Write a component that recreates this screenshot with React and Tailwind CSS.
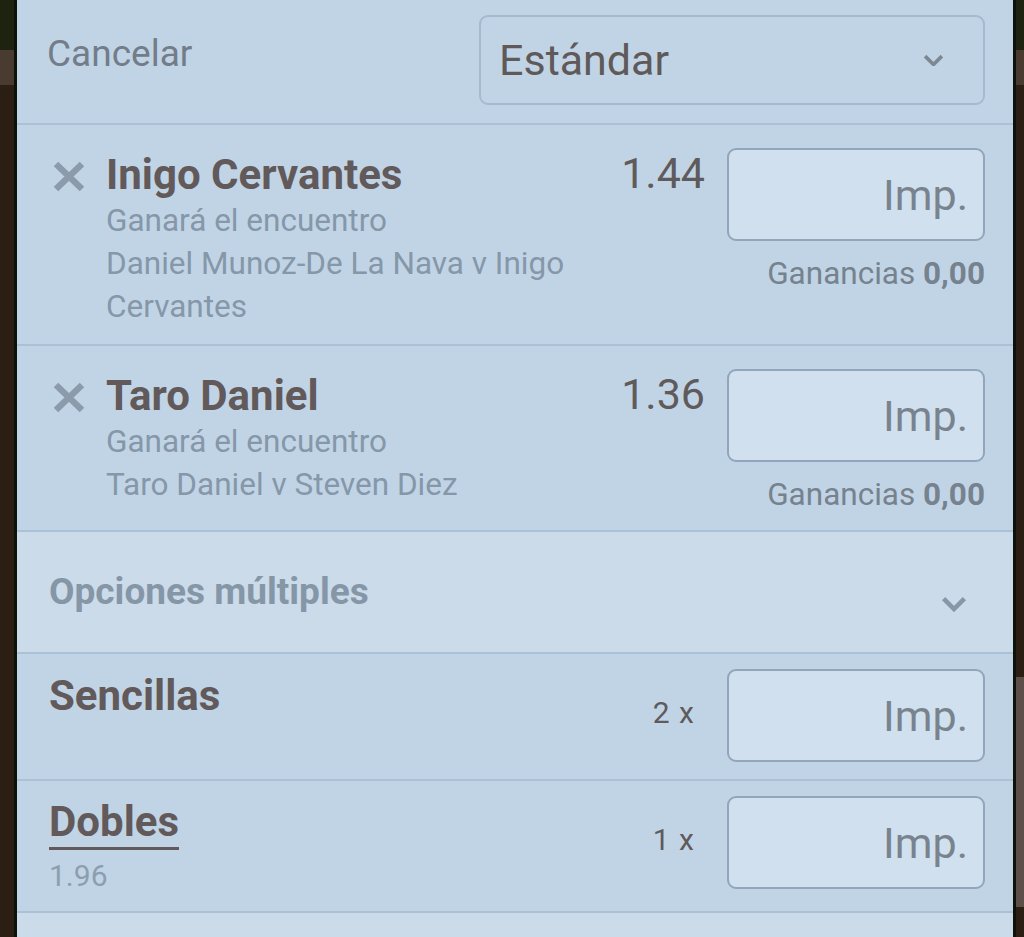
import React from 'react';

const font = { fontFamily: 'Roboto, "Noto Sans", sans-serif' };

const XIcon = () => (
  <svg width="34" height="33" viewBox="0 0 34 33" className="shrink-0">
    <path d="M4 4 L30 29 M30 4 L4 29" stroke="#8b9bab" strokeWidth="6.5" />
  </svg>
);

const Chevron = ({ w = 20, color = '#7f8a96' }) => (
  <svg width={w} height={w * 0.6} viewBox="0 0 20 12">
    <path d="M2 2 L10 10 L18 2" fill="none" stroke={color} strokeWidth="3.5" />
  </svg>
);

const ImpBox = () => (
  <div className="w-[258px] h-[93px] rounded-[9px] border-2 border-[#91a6ba] bg-[#d0e0ef] flex items-center justify-end pr-[15px]">
    <span className="text-[43px] leading-[50px] text-[#78838e]">Imp.</span>
  </div>
);

const Selection = ({ name, odds, lines, h }) => (
  <div className={`flex border-b-2 border-[#abc1d5] pl-[35px] pr-[28px] ${h}`}>
    <div className="flex-1 flex items-start gap-[20px]">
      <div className="mt-[35px]">
        <XIcon />
      </div>
      <div className="flex flex-col pt-[26px] whitespace-nowrap">
        <span className="text-[42px] font-bold text-[#625a5a] leading-[48px]">{name}</span>
        {lines.map((l, i) => (
          <span key={i} className="text-[31.5px] text-[#8597a8] leading-[43px]">{l}</span>
        ))}
      </div>
    </div>
    <div className="text-[43px] text-[#5f5a5b] pt-[23px] pr-[22px] leading-[50px]">{odds}</div>
    <div className="flex flex-col items-end pt-[23px]">
      <ImpBox />
      <div className="text-[31.5px] leading-[36px] text-[#76828e] mt-[15px] whitespace-nowrap">
        Ganancias <span className="font-bold">0,00</span>
      </div>
    </div>
  </div>
);

const MultiRow = ({ children, count, h, pt }) => (
  <div className={`flex border-b-2 border-[#abc1d5] pl-[32px] pr-[28px] ${h}`}>
    <div className="flex-1 flex flex-col items-start">{children}</div>
    <div className={`${pt} pr-[32px] text-[30px] leading-[36px] text-[#5f5a5b] tracking-[1px]`}>{count}</div>
    <div className="pt-[15px]">
      <ImpBox />
    </div>
  </div>
);

export default function App() {
  return (
    <div className="w-[1024px] h-[937px] overflow-hidden flex bg-[#2a1f12]" style={font}>
      <div className="w-[14px] flex flex-col">
        <div className="h-[50px] bg-[#1e2310]" />
        <div className="h-[35px] bg-[#4a3b30]" />
        <div className="flex-1 bg-[#2a1f12]" />
      </div>
      <div className="w-[3px] bg-[#0f120a]" />
      <div className="flex-1 bg-[#c1d4e6] flex flex-col">
        <div className="h-[125px] flex border-b-2 border-[#abc1d5] pl-[30px] pr-[28px]">
          <div className="flex-1 pt-[32px] text-[37px] leading-[44px] text-[#727d89]">Cancelar</div>
          <div className="mt-[15px] w-[506px] h-[90px] rounded-[9px] border-2 border-[#a5bacf] flex items-center justify-between pl-[18px] pr-[39px]">
            <span className="text-[43px] leading-[50px] text-[#5f5959]">Estándar</span>
            <Chevron w={21} color="#7e8893" />
          </div>
        </div>
        <Selection
          name="Inigo Cervantes"
          odds="1.44"
          h="h-[221px]"
          lines={['Ganará el encuentro', 'Daniel Munoz-De La Nava v Inigo', 'Cervantes']}
        />
        <Selection
          name="Taro Daniel"
          odds="1.36"
          h="h-[186px]"
          lines={['Ganará el encuentro', 'Taro Daniel v Steven Diez']}
        />
        <div className="h-[122px] bg-[#cbdbea] border-b-2 border-[#abc1d5] flex items-start justify-between pl-[32px] pr-[46px]">
          <span className="pt-[38px] text-[37px] leading-[44px] font-bold text-[#8596a7]">Opciones múltiples</span>
          <span className="pt-[64px]">
            <Chevron w={26} color="#8797a7" />
          </span>
        </div>
        <MultiRow count="2 x" h="h-[127px]" pt="pt-[41px]">
          <span className="pt-[18px] text-[42px] leading-[48px] font-bold text-[#625a5a]">Sencillas</span>
        </MultiRow>
        <MultiRow count="1 x" h="h-[132px]" pt="pt-[41px]">
          <span className="mt-[17px] pb-[1px] text-[42px] leading-[48px] font-bold text-[#625a5a] border-b-[3px] border-[#625a5a]">
            Dobles
          </span>
          <span className="mt-[8px] text-[30px] leading-[36px] text-[#8d9eae]">1.96</span>
        </MultiRow>
        <div className="flex-1 bg-[#cbdbea]" />
      </div>
      <div className="w-[3px] bg-[#0f120a]" />
      <div className="w-[8px] flex flex-col">
        <div className="h-[50px] bg-[#1e2310]" />
        <div className="h-[35px] bg-[#4a3b30]" />
        <div className="h-[592px] bg-[#2a1f12]" />
        <div className="h-[230px] bg-[#5d504a]" />
        <div className="flex-1 bg-[#2a1f12]" />
      </div>
    </div>
  );
}
